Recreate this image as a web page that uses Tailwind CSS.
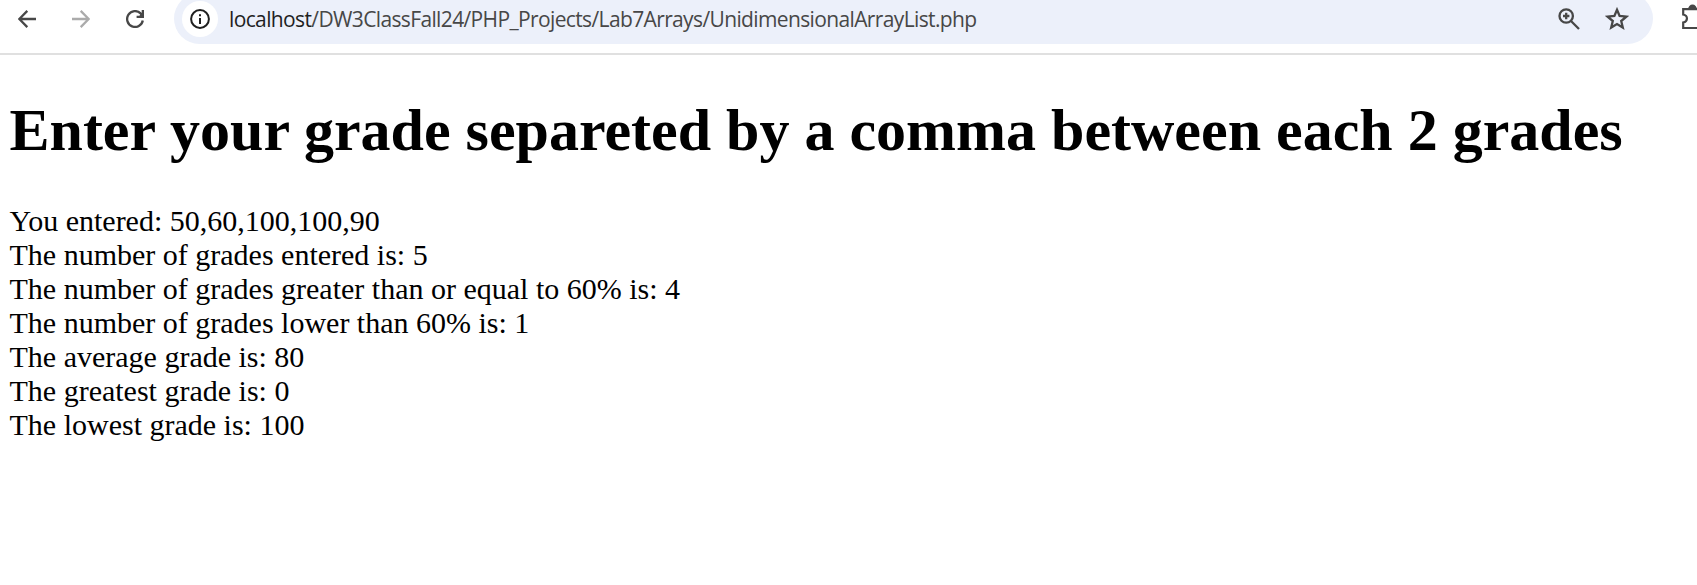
<!DOCTYPE html>
<html lang="en"><head><meta charset="utf-8"><title>Grades</title><script src="https://cdn.jsdelivr.net/npm/@tailwindcss/browser@4"></script></head>
<body class="h-[585px] overflow-hidden bg-white text-black">
<header class="flex h-[55px] items-start overflow-hidden border-b-2 border-[#e0e0e0]">
<nav class="flex h-[37px] w-[174px] shrink-0 items-center gap-9 pl-[18px] text-[#474747]">
<svg class="size-[18px]" viewBox="0 0 18 18" fill="none" stroke="currentColor" stroke-width="2.3"><path d="M18 9H1.5M9.3.9 1.3 9l8 8.1"/></svg>
<svg class="size-[18px] text-[#ababab]" viewBox="0 0 18 18" fill="none" stroke="currentColor" stroke-width="2.3"><path d="M0 9h16.5M8.7.9l8 8.1-8 8.1"/></svg>
<svg class="size-[18px]" viewBox="0 0 18 18" fill="none" stroke="currentColor" stroke-width="2.3"><path d="M16.8 10.5A7.9 7.9 0 1 1 14.6 3.4l1.6 1.7"/><path d="M10.6 8V5.7h2.8L15.7 3V0H18v8z" fill="currentColor" stroke="none"/></svg>
</nav>
<div class="-mt-[7px] flex h-[51px] w-[1479px] shrink-0 items-center rounded-full bg-[#ecf0fa]">
<span class="ml-[8px] flex size-9 shrink-0 items-center justify-center rounded-full bg-white"><svg class="size-5" viewBox="0 0 20 20" fill="none" stroke="#1f1f1f" stroke-width="2"><circle cx="10" cy="10" r="8.9"/><path d="M10 9v6M10 5.2v2"/></svg></span>
<span class="ml-[11px] font-['Open_Sans',sans-serif] text-[21px] leading-7 tracking-[-0.63px] whitespace-nowrap text-[#474747]"><span class="text-[#1f1f1f]">localhost</span>/DW3ClassFall24/PHP_Projects/Lab7Arrays/UnidimensionalArrayList.php</span>
<div class="mr-[24px] ml-auto flex items-center gap-[25px] text-[#474747]">
<svg class="size-[22px]" viewBox="0 0 22 22" fill="none" stroke="currentColor" stroke-width="2.3"><circle cx="8.2" cy="8" r="6.7"/><path d="m13 13 8 8M8.2 4.8v6.4M5 8h6.4"/></svg>
<svg class="size-6" viewBox="0 0 24 24" fill="none" stroke="currentColor" stroke-width="2.3"><path d="m12 2.8 2.6 6.2 6.8.6-5.2 4.4 1.6 6.6-5.8-3.5-5.8 3.5L7.8 14 2.6 9.6l6.8-.6z"/></svg>
</div>
</div>
<svg class="mt-[4px] ml-[28px] h-[26px] w-[26px] shrink-0" viewBox="0 0 26 26" fill="none" stroke="#474747" stroke-width="2.2"><path d="M2.2 24V18.5c5-1 5-7 0-8V5.2H22V24z"/><path d="M8.2 5a3.3 3.3 0 0 1 6.6 0z" fill="#474747"/></svg>
</header>
<main class="px-[9.5px] pt-[41px] font-['Liberation_Serif',serif]">
<h1 class="mb-[40px] text-[60px] leading-[68px] font-bold whitespace-nowrap">Enter your grade separeted by a comma between each 2 grades</h1>
<div class="text-[30px] leading-[34px]"><p>You entered: 50,60,100,100,90</p><p>The number of grades entered is: 5</p><p>The number of grades greater than or equal to 60% is: 4</p><p>The number of grades lower than 60% is: 1</p><p>The average grade is: 80</p><p>The greatest grade is: 0</p><p>The lowest grade is: 100</p></div>
</main></body></html>
